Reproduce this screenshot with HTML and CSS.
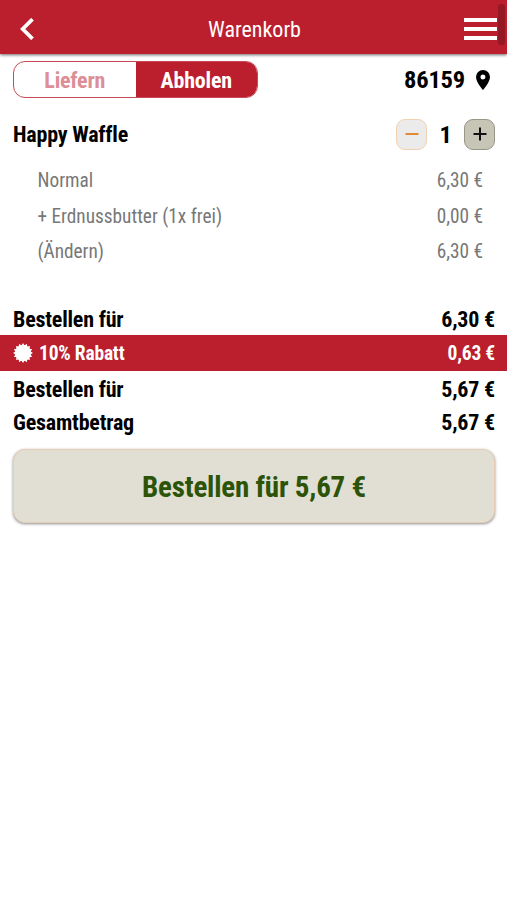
FILE: index.html
```html
<!DOCTYPE html>
<html lang="de">
<head>
  <meta charset="UTF-8">
  <meta name="viewport" content="width=device-width, initial-scale=1.0">
  <title>Warenkorb</title>
  <link rel="stylesheet" href="styles.css">
</head>
<body>
  <header class="header">
    <svg class="back" width="14" height="22" viewBox="0 0 14 22"><path d="M12.500 1.200 2.700 11l9.800 9.800" fill="none" stroke="#fff" stroke-width="3.800"/></svg>
    <h1 class="title">Warenkorb</h1>
    <div class="menu"><i></i><i></i><i></i></div>
    <div class="scrollbar"></div>
  </header>

  <div class="delivery">
    <div class="toggle">
      <div class="option">Liefern</div>
      <div class="option active">Abholen</div>
    </div>
    <div class="zip">
      <span>86159</span>
      <svg width="14" height="20" viewBox="0 0 14 20"><path fill="#000" fill-rule="evenodd" d="M7 0a7 7 0 0 0-7 7c0 5.200 7 13 7 13s7-7.800 7-13a7 7 0 0 0-7-7zm0 9.500a2.500 2.500 0 1 1 0-5 2.500 2.500 0 0 1 0 5z"/></svg>
    </div>
  </div>

  <div class="product">
    <span class="name">Happy Waffle</span>
    <div class="quantity">
      <button class="minus"><svg width="14" height="14" viewBox="0 0 14 14"><path d="M.5 7h13" stroke="#e08a33" stroke-width="2"/></svg></button>
      <span class="count">1</span>
      <button class="plus"><svg width="14" height="14" viewBox="0 0 14 14"><path d="M.5 7h13M7 .5v13" stroke="#111" stroke-width="2"/></svg></button>
    </div>
  </div>

  <div class="details">
    <div class="row"><span>Normal</span><span>6,30 €</span></div>
    <div class="row"><span>+ Erdnussbutter (1x frei)</span><span>0,00 €</span></div>
    <div class="row"><span>(Ändern)</span><span>6,30 €</span></div>
  </div>

  <div class="totals">
    <div class="row"><span>Bestellen für</span><span>6,30 €</span></div>
    <div class="row discount">
      <div class="label">
        <svg width="20" height="20" viewBox="-10 -10 20 20">
          <circle r="8" fill="#fff"/>
          <g fill="#fff">
            <path id="spikes" d="M0-10 3-5H-3zM0 10 3 5H-3zM-10 0-5-3V3zM10 0 5-3V3z"/>
            <use href="#spikes" transform="rotate(22.5)"/>
            <use href="#spikes" transform="rotate(45)"/>
            <use href="#spikes" transform="rotate(67.5)"/>
          </g>
        </svg>
        <span>10% Rabatt</span>
      </div>
      <span>0,63 €</span>
    </div>
    <div class="row"><span>Bestellen für</span><span>5,67 €</span></div>
    <div class="row"><span>Gesamtbetrag</span><span>5,67 €</span></div>
  </div>

  <button class="order">Bestellen für 5,67 €</button>
</body>
</html>
```

FILE: styles.css
```css
* {
  box-sizing: border-box;
}
body {
  margin: 0;
  min-height: 100vh;
  background: #fff;
  color: #000;
  font-family: "Roboto Condensed", Roboto, sans-serif;
  font-stretch: 75%;
  font-size: 22px;
  letter-spacing: -0.2px;
}
button {
  padding: 0;
  font: inherit;
  letter-spacing: inherit;
}
.header {
  position: relative;
  display: flex;
  align-items: center;
  justify-content: space-between;
  height: 54px;
  padding: 3px 10px 0 20px;
  background: #bb1e2d;
  box-shadow: 0 1px 3px rgba(0, 0, 0, 0.6);
}
.back {
  padding-right: 11px;
  box-sizing: content-box;
}
.title {
  margin: 0;
  padding-top: 2px;
  color: #fff;
  font-size: 22px;
  font-weight: 450;
  letter-spacing: 0;
}
.menu {
  display: flex;
  flex-direction: column;
  gap: 5px;
}
.menu i {
  width: 33px;
  height: 4px;
  background: #fff;
}
.scrollbar {
  position: absolute;
  top: 4px;
  right: 2px;
  width: 7px;
  height: 41px;
  border-radius: 3px;
  background: #961824;
}
.delivery {
  display: flex;
  align-items: center;
  justify-content: space-between;
  height: 50px;
  padding: 0 17px 0 13px;
}
.toggle {
  display: flex;
  width: 245px;
  height: 37px;
  border: 1px solid #c94a57;
  border-radius: 12px;
  overflow: hidden;
}
.option {
  flex: 1;
  display: flex;
  align-items: center;
  justify-content: center;
  padding-top: 2px;
  color: #dd8e96;
  font-weight: 700;
}
.option.active {
  background: #bb1e2d;
  color: #fff;
}
.zip {
  display: flex;
  align-items: center;
  gap: 11px;
  padding-top: 1px;
  font-size: 24.5px;
  font-weight: 700;
}
.product {
  display: flex;
  align-items: center;
  justify-content: space-between;
  height: 60px;
  padding: 0 12px 0 13px;
  font-weight: 700;
}
.name {
  font-variant-ligatures: none;
}
.quantity {
  display: flex;
  align-items: center;
}
.minus, .plus {
  display: flex;
  align-items: center;
  justify-content: center;
  width: 31px;
  height: 31px;
  border: 1px solid #f0d2b0;
  border-radius: 9px;
  background: #ebebeb;
}
.plus {
  border-color: #969689;
  background: #c7c6b6;
}
.count {
  width: 37px;
  padding-top: 1px;
  text-align: center;
  font-size: 24.5px;
}
.details {
  margin-top: -1px;
  padding: 0 24px 0 37.5px;
  color: #777;
  font-size: 19.3px;
  letter-spacing: 0;
}
.row {
  display: flex;
  align-items: center;
  justify-content: space-between;
}
.details .row {
  height: 35.5px;
}
.totals {
  margin-top: 32px;
  font-weight: 700;
}
.totals .row {
  height: 33px;
  padding: 2px 12px 0 13px;
}
.totals .discount {
  height: 36px;
  margin-bottom: 1px;
  background: #bb1e2d;
  color: #fff;
  font-size: 19.5px;
}
.label {
  display: flex;
  align-items: center;
  gap: 6px;
}
.label svg {
  margin-top: -1px;
}
.order {
  display: block;
  width: 482px;
  height: 74px;
  margin: 11px 12px 0 13px;
  padding-top: 2px;
  border: 1px solid #e6cdb4;
  border-radius: 12px;
  background: #e1dfd3;
  box-shadow: 0 1px 3px rgba(0, 0, 0, 0.45);
  color: #2d5308;
  font-size: 29px;
  font-weight: 700;
}
```
